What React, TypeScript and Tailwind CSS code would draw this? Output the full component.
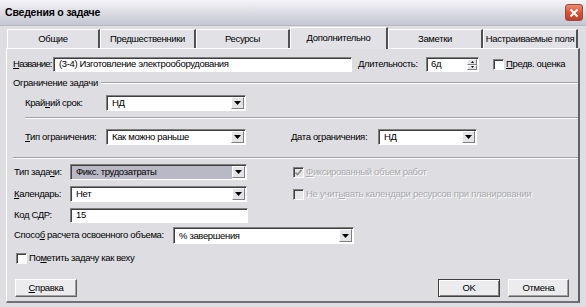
import React from "react";

const Arrow = () => (
  <svg width="7" height="4" viewBox="0 0 7 4"><path d="M0 0h7L3.5 4z" fill="#000" /></svg>
);

const Combo = ({ w, h = 16, text, sel = false }: { w: number; h?: number; text: string; sel?: boolean }) => (
  <div
    className="flex items-stretch shrink-0 border border-t-[#808080] border-l-[#808080] border-b-white border-r-white shadow-[inset_1px_1px_0_#404040] bg-white"
    style={{ width: w, height: h }}
  >
    <div className={`flex-1 flex items-center pl-[4px] whitespace-nowrap ${sel ? "bg-[#b9b9c6]" : ""} ml-[1px] mt-[1px]`}>{text}</div>
    <div className="w-[13px] my-[1px] mr-[1px] flex items-center justify-center bg-[#e4e4e8] border border-t-white border-l-white border-r-[#808080] border-b-[#808080]">
      <Arrow />
    </div>
  </div>
);

const Field = ({ w, h = 15, text }: { w: number; h?: number; text: string }) => (
  <div
    className="flex items-center shrink-0 whitespace-nowrap pl-[5px] bg-white border border-t-[#808080] border-l-[#808080] border-b-white border-r-white shadow-[inset_1px_1px_0_#404040]"
    style={{ width: w, height: h }}
  >
    {text}
  </div>
);

const Check = ({ checked = false, disabled = false }: { checked?: boolean; disabled?: boolean }) => (
  <div
    className={`w-[11px] h-[11px] shrink-0 flex items-center justify-center border border-t-[#808080] border-l-[#808080] border-b-white border-r-white shadow-[inset_1px_1px_0_#404040] ${disabled ? "bg-[#e6e6e8]" : "bg-white"}`}
  >
    {checked && (
      <svg width="7" height="7" viewBox="0 0 7 7"><path d="M0.5 3.5l2 2 4-4.5" stroke={disabled ? "#8a8a8a" : "#000"} strokeWidth="1.6" fill="none" /></svg>
    )}
  </div>
);

const Sep = ({ ml }: { ml: number }) => (
  <div className="h-[2px] border-t border-t-[#a0a0a6] border-b border-b-white" style={{ marginLeft: ml }} />
);

const Btn = ({ w, text, def = false }: { w: number; text: React.ReactNode; def?: boolean }) => (
  <div
    className={`h-[18px] flex items-center justify-center whitespace-nowrap bg-[#ececee] ${def ? "border border-[#404040] shadow-[inset_1px_1px_0_#fff,inset_-1px_-1px_0_#808080]" : "border border-t-white border-l-white border-r-[#606060] border-b-[#606060] shadow-[inset_-1px_-1px_0_#a0a0a0]"}`}
    style={{ width: w }}
  >
    {text}
  </div>
);

const U = ({ children }: { children: React.ReactNode }) => <span className="underline">{children}</span>;

export default function App() {
  const tabs = [
    { t: "Общие", w: 93 },
    { t: "Предшественники", w: 96 },
    { t: "Ресурсы", w: 94 },
    { t: "Дополнительно", w: 98, sel: true },
    { t: "Заметки", w: 95 },
    { t: "Настраиваемые поля", w: 95 },
  ];
  return (
    <div
      className="w-[586px] h-[307px] bg-[#dedee2] flex flex-col text-[9.5px] tracking-[-0.35px] text-black overflow-hidden whitespace-nowrap"
      style={{ fontFamily: '"Liberation Sans", Arial, sans-serif' }}
    >
      {/* title bar */}
      <div className="h-[26px] shrink-0 flex items-center pl-[5px] pr-[3px] bg-gradient-to-b from-[#f4f4f8] via-[#dcdce4] to-[#c4c6d2] border-b border-[#b8b8c4]">
        <div className="font-bold text-[10.5px] tracking-[-0.2px]">Сведения о задаче</div>
        <div className="ml-auto w-[18px] h-[17px] rounded-[3px] border border-[#9a4a3a] bg-gradient-to-b from-[#ee8a70] via-[#d9543a] to-[#c0402a] flex items-center justify-center">
          <svg width="10" height="10" viewBox="0 0 10 10"><path d="M1.5 1.5l7 7M8.5 1.5l-7 7" stroke="#fff" strokeWidth="2" /></svg>
        </div>
      </div>
      {/* tabs */}
      <div className="h-[22px] shrink-0 flex items-end pl-[7px]">
        {tabs.map((tb) => (
          <div
            key={tb.t}
            className={`flex items-center justify-center whitespace-nowrap bg-[#e2e2e6] border-t border-l border-t-white border-l-white border-r-2 border-r-[#505058] ${tb.sel ? "h-[22px] -mb-[1px] z-10 relative" : "h-[19px]"}`}
            style={{ width: tb.w }}
          >
            {tb.t}
          </div>
        ))}
      </div>
      {/* panel */}
      <div className="ml-[6px] w-[574px] h-[255px] shrink-0 flex flex-col border-l border-t border-l-white border-t-white border-r-2 border-r-[#606068] border-b-2 border-b-[#707078]">
        {/* row 1 */}
        <div className="flex items-center mt-[8px] pl-[6px] h-[15px]">
          <div className="w-[40px] shrink-0 tracking-[-0.7px]"><U>Н</U>азвание:</div>
          <Field w={299} text="(3-4) Изготовление электрооборудования" />
          <div className="w-[68px] ml-[6px] shrink-0"><U>Д</U>лительность:</div>
          <div className="flex shrink-0 w-[53px] h-[15px] bg-white border border-t-[#808080] border-l-[#808080] border-b-white border-r-white shadow-[inset_1px_1px_0_#404040]">
            <div className="flex-1 flex items-center pl-[4px]">6д</div>
            <div className="w-[10px] flex flex-col my-[1px] mr-[1px]">
              <div className="flex-1 bg-[#e4e4e8] border border-t-white border-l-white border-r-[#808080] border-b-[#808080] flex items-center justify-center">
                <svg width="3" height="2" viewBox="0 0 3 2"><path d="M1.5 0L3 2H0z" /></svg>
              </div>
              <div className="flex-1 bg-[#e4e4e8] border border-t-white border-l-white border-r-[#808080] border-b-[#808080] flex items-center justify-center">
                <svg width="3" height="2" viewBox="0 0 3 2"><path d="M0 0h3L1.5 2z" /></svg>
              </div>
            </div>
          </div>
          <div className="ml-[14px] flex items-center gap-[2px]">
            <Check />
            <span><U>П</U>редв. оценка</span>
          </div>
        </div>
        {/* group label */}
        <div className="flex items-center mt-[5px] pl-[6px] h-[12px]">
          <span>Ограничение задачи</span>
          <div className="flex-1 ml-[3px]"><Sep ml={0} /></div>
        </div>
        {/* deadline */}
        <div className="flex items-center mt-[6px] pl-[18px] h-[16px]">
          <div className="w-[81px] shrink-0">Край<U>н</U>ий срок:</div>
          <Combo w={140} text="НД" />
        </div>
        <div className="mt-[6px]"><Sep ml={18} /></div>
        {/* constraint type */}
        <div className="flex items-center mt-[10px] pl-[18px] h-[16px]">
          <div className="w-[81px] shrink-0"><U>Т</U>ип ограничения:</div>
          <Combo w={140} text="Как можно раньше" />
          <div className="ml-[45px] w-[87px] shrink-0">Дата о<U>г</U>раничения:</div>
          <Combo w={99} text="НД" />
        </div>
        <div className="mt-[12px]"><Sep ml={6} /></div>
        {/* task type */}
        <div className="flex items-center mt-[5px] pl-[7px] h-[16px]">
          <div className="w-[56px] shrink-0">Тип зада<U>ч</U>и:</div>
          <Combo w={177} text="Фикс. трудозатраты" sel />
          <div className="ml-[46px] flex items-center gap-[2px] text-[#a8a8ae]">
            <Check checked disabled />
            <span className="[text-shadow:1px_1px_0_#fff]"><U>Ф</U>иксированный объем работ</span>
          </div>
        </div>
        <div className="flex items-center mt-[6px] pl-[7px] h-[16px]">
          <div className="w-[56px] shrink-0"><U>К</U>алендарь:</div>
          <Combo w={177} text="Нет" />
          <div className="ml-[46px] flex items-center gap-[2px] text-[#a8a8ae]">
            <Check disabled />
            <span className="[text-shadow:1px_1px_0_#fff] tracking-[-0.25px]">Не учит<U>ы</U>вать календари ресурсов при планировании</span>
          </div>
        </div>
        <div className="flex items-center mt-[6px] pl-[7px] h-[15px]">
          <div className="w-[56px] shrink-0">Код С<U>Д</U>Р:</div>
          <Field w={178} text="15" />
        </div>
        <div className="flex items-center mt-[4px] pl-[7px] h-[17px]">
          <div className="w-[159px] shrink-0">Спосо<U>б</U> расчета освоенного объема:</div>
          <Combo w={181} h={17} text="% завершения" />
        </div>
        <div className="flex items-center mt-[9px] pl-[9px] gap-[2px] h-[11px]">
          <Check />
          <span>По<U>м</U>етить задачу как веху</span>
        </div>
        <div className="flex items-center mt-[15px] pl-[8px] pr-[9px]">
          <Btn w={62} text={<span><U>С</U>правка</span>} />
          <div className="ml-auto flex gap-[8px]">
            <Btn w={62} text="OK" def />
            <Btn w={61} text="Отмена" />
          </div>
        </div>
      </div>
    </div>
  );
}
